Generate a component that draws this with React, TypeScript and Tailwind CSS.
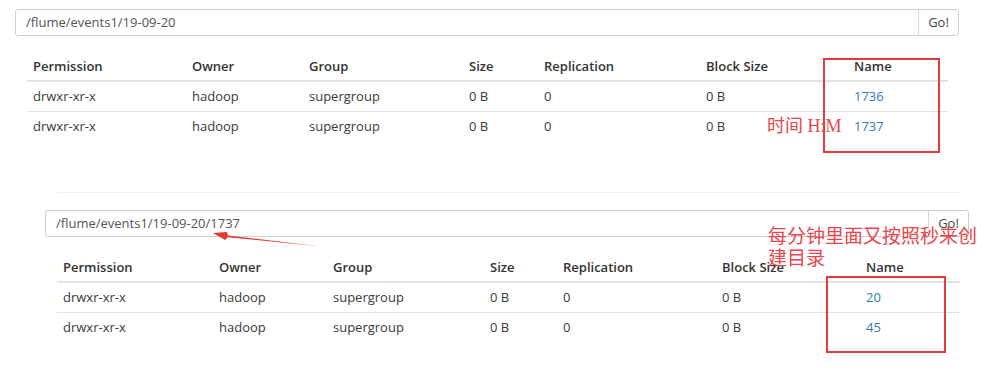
import React from 'react';

type Row = { perm: string; owner: string; group: string; size: string; repl: string; block: string; name: string };

const headers = ['Permission', 'Owner', 'Group', 'Size', 'Replication', 'Block Size', 'Name'];

const PathBar = ({ path, width }: { path: string; width: string }) => (
  <div className={`flex h-[27px] ${width} rounded-[3px] border border-[#cfcfcf] bg-white`}>
    <div className="flex flex-1 items-center pl-[10px] text-[13px] text-[#555]">{path}</div>
    <div className="flex w-[40px] items-center justify-center border-l border-[#d6d6d6] text-[13px] text-[#444]">Go!</div>
  </div>
);

const Listing = ({ rows, cols }: { rows: Row[]; cols: number[] }) => (
  <table className="table-fixed border-collapse text-[13px] text-[#3a3a3a]">
    <colgroup>
      {cols.map((w, i) => (
        <col key={i} style={{ width: w }} />
      ))}
    </colgroup>
    <thead>
      <tr className="h-[30px] border-b-2 border-[#e2e2e2]">
        {headers.map((h) => (
          <th key={h} className="px-[6px] pt-[2px] text-left font-semibold text-[#333]">{h}</th>
        ))}
      </tr>
    </thead>
    <tbody>
      {rows.map((r, i) => (
        <tr key={r.name} className={`h-[30px] ${i === 0 ? 'border-b border-[#e2e2e2]' : ''}`}>
          <td className="px-[6px]">{r.perm}</td>
          <td className="px-[6px]">{r.owner}</td>
          <td className="px-[6px]">{r.group}</td>
          <td className="px-[6px]">{r.size}</td>
          <td className="px-[6px]">{r.repl}</td>
          <td className="px-[6px]">{r.block}</td>
          <td className="px-[6px] text-[#337ab7]">{r.name}</td>
        </tr>
      ))}
    </tbody>
  </table>
);

const mk = (name: string): Row => ({ perm: 'drwxr-xr-x', owner: 'hadoop', group: 'supergroup', size: '0 B', repl: '0', block: '0 B', name });

export default function App() {
  return (
    <div className="relative h-[373px] w-[987px] overflow-hidden bg-white font-['Open_Sans','Noto_Sans_CJK_SC',sans-serif]">
      <div className="flex flex-col pl-[15px] pt-[9px]">
        <PathBar path="/flume/events1/19-09-20" width="w-[944px]" />
        <div className="ml-[12px] mt-[15px]">
          <Listing rows={[mk('1736'), mk('1737')]} cols={[159, 117, 160, 75, 162, 148, 100]} />
        </div>
      </div>

      <div className="ml-[57px] mt-[51px] h-px w-[903px] bg-[#f3f3f3]" />

      <div className="flex flex-col pl-[45px] pt-[17px]">
        <PathBar path="/flume/events1/19-09-20/1737" width="w-[924px]" />
        <div className="ml-[12px] mt-[15px]">
          <Listing rows={[mk('20'), mk('45')]} cols={[156, 114, 157, 73, 159, 144, 100]} />
        </div>
      </div>

      {/* annotations */}
      <div className="absolute left-[823px] top-[58px] h-[95px] w-[117px] border-2 border-[#e53b3b]" />
      <div className="absolute left-[767px] top-[115px] text-[18px] leading-[22px] text-[#e8454d] font-['Liberation_Serif','Noto_Sans_CJK_SC',serif]">
        时间 H:M
      </div>

      <div className="absolute left-[826px] top-[276px] h-[77px] w-[120px] border-2 border-[#e53b3b]" />
      <div className="absolute left-[768px] top-[224px] w-[220px] text-[19px] leading-[22px] text-[#e8454d] font-['Noto_Sans_CJK_SC',serif]">
        每分钟里面又按照秒来创
        <br />
        建目录
      </div>

      <svg className="absolute left-0 top-0" width="987" height="373">
        <polygon points="321,246.5 228,235.5 227,232 213,233 225,240 228,237.2" fill="#e53935" />
      </svg>
    </div>
  );
}
